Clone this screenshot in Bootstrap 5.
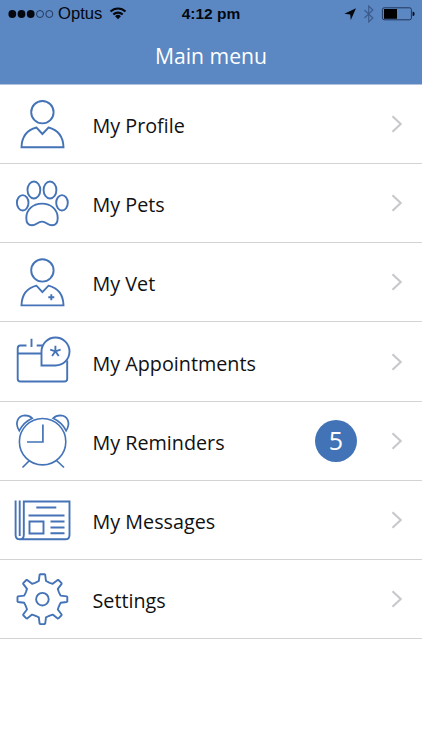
<!DOCTYPE html>
<html lang="en">

<head>
    <meta charset="UTF-8">
    <meta name="viewport" content="width=device-width, initial-scale=1.0">
    <title>Main menu</title>
    <link href="https://cdn.jsdelivr.net/npm/bootstrap@5.3.0/dist/css/bootstrap.min.css" rel="stylesheet">
    <script src="https://cdn.jsdelivr.net/npm/bootstrap@5.3.0/dist/js/bootstrap.bundle.min.js"></script>
    <style>
        body {
            font-family: "Open Sans", "Noto Sans", sans-serif;
            overflow: hidden;
        }

        .app-header {
            height: 85px;
            background: #5b87c2;
            border-bottom: 1px solid #b3c3de;
        }

        .status-bar {
            height: 28px;
            font-family: "Liberation Sans", Arial, sans-serif;
            font-size: 16.6px;
            line-height: 28px;
            color: #05080f;
        }

        .status-bar svg {
            display: block;
        }

        .status-time {
            font-size: 15.5px;
        }

        .page-title {
            font-size: 21.2px;
            line-height: 56px;
        }

        .menu-row {
            height: 79.17px;
            border-bottom: 1px solid #d3d3d5;
            color: #111;
        }

        .menu-row:hover {
            color: #111;
        }

        .menu-icon {
            width: 80px;
            height: 78px;
            margin-right: 12.5px;
            fill: none;
            stroke: #4473b7;
            stroke-width: 1.9;
        }

        .menu-label {
            font-size: 19.75px;
            line-height: 28px;
            padding-top: 4px;
        }

        .count {
            width: 42px;
            height: 42px;
            margin-right: 34px;
            padding-top: 1px;
            background: #4273b7;
            font-size: 25px;
        }

        .chevron {
            width: 12px;
            height: 18px;
            margin-right: 19px;
            fill: none;
            stroke: #c7c7cc;
            stroke-width: 2.1;
        }
    </style>
</head>

<body class="bg-white">

    <header class="app-header text-white text-center">
        <div class="status-bar row g-0">
            <div class="col-5 d-flex align-items-center">
                <svg width="58" height="28">
                    <g fill="#05080f">
                        <circle cx="12.3" cy="14" r="3.9" />
                        <circle cx="21.5" cy="14" r="3.9" />
                        <circle cx="30.7" cy="14" r="3.9" />
                    </g>
                    <g fill="none" stroke="#142545" stroke-width=".8">
                        <circle cx="40" cy="14" r="3.5" />
                        <circle cx="49.3" cy="14" r="3.5" />
                    </g>
                </svg>
                <span>Optus</span>
                <svg width="30" height="28" fill="none" stroke="#05080f" stroke-width="2.1">
                    <path d="M8.5 11.6a10.7 10.7 0 0 1 15 0M11.3 14.6a6.7 6.7 0 0 1 9.4 0" />
                    <path d="M16 19.2l-2.9-2.9a4.1 4.1 0 0 1 5.8 0z" fill="#05080f" stroke="none" />
                </svg>
            </div>
            <div class="col-2 text-nowrap fw-bold status-time">4:12 pm</div>
            <div class="col-5 d-flex justify-content-end">
                <svg width="84" height="28">
                    <path d="M18 8.2L12.8 20l-.6-5.6-5.8-.6z" fill="#05080f" />
                    <path d="M26.4 10l8.5 8-4.2 4V6l4.2 4-8.5 8" fill="none" stroke="#3a5a8c" stroke-width="1.1" />
                    <rect x="44.4" y="7.8" width="29" height="12" rx="1.8" fill="none" stroke="#21375e" stroke-width="1" />
                    <path d="M46 9h13v9.8H46z" fill="#000" />
                    <path d="M74.6 11.6q2 .5 2 2.3t-2 2.3z" fill="#05080f" />
                </svg>
            </div>
        </div>
        <div class="page-title">Main menu</div>
    </header>

    <nav>
        <a href="#" class="menu-row d-flex align-items-center text-decoration-none">
            <svg class="menu-icon" viewBox="0 0 80 78">
                <circle cx="42.4" cy="27.2" r="11.2" />
                <path d="M36.5 42.5C27 45 21.8 52 21.5 62.3h42C63.2 52 58 45 48.5 42.5L42.4 49z" />
            </svg>
            <span class="menu-label">My Profile</span>
            <svg class="chevron ms-auto" viewBox="0 0 12 18"><path d="M1.5 1.3L9.7 9l-8.2 7.7" /></svg>
        </a>
        <a href="#" class="menu-row d-flex align-items-center text-decoration-none">
            <svg class="menu-icon" viewBox="0 0 80 78">
                <ellipse cx="33.9" cy="26" rx="6.4" ry="8.5" />
                <ellipse cx="50" cy="26" rx="6.4" ry="8.5" />
                <ellipse cx="22.7" cy="38.8" rx="5.8" ry="7.7" />
                <ellipse cx="62" cy="38.8" rx="5.8" ry="7.7" />
                <path d="M42 39.6C33 39.6 26.3 45.5 26.3 54C26.3 58.5 28.5 61.3 32 61.3C36.5 61.3 37.5 57.6 42 57.6S47.5 61.3 52 61.3C55.5 61.3 57.7 58.5 57.7 54C57.7 45.5 51 39.6 42 39.6z" />
            </svg>
            <span class="menu-label">My Pets</span>
            <svg class="chevron ms-auto" viewBox="0 0 12 18"><path d="M1.5 1.3L9.7 9l-8.2 7.7" /></svg>
        </a>
        <a href="#" class="menu-row d-flex align-items-center text-decoration-none">
            <svg class="menu-icon" viewBox="0 0 80 78">
                <circle cx="42.4" cy="27.4" r="11.2" />
                <path d="M36.5 42.7C27 45 21.8 52 21.5 62.4h42C63.2 52 58 45 48.5 42.7L42.4 49.2z" />
                <path d="M48.3 54.2h6M51.3 51.2v6" />
            </svg>
            <span class="menu-label">My Vet</span>
            <svg class="chevron ms-auto" viewBox="0 0 12 18"><path d="M1.5 1.3L9.7 9l-8.2 7.7" /></svg>
        </a>
        <a href="#" class="menu-row d-flex align-items-center text-decoration-none">
            <svg class="menu-icon" viewBox="0 0 80 78">
                <path d="M26.5 22.5H20.3Q17.7 22.5 17.7 25.5V55.7Q17.7 58.5 20.5 58.5H64.3Q67.2 58.5 67.2 55.7V37.5M17.7 30.5H41.5M31.5 15.7V24M36.7 22.5h6" />
                <path d="M41.5 42.5V28.5A14 14 0 1 1 55.5 42.5z" />
                <path d="M55.4 28.3v-5.6M55.4 28.3l5.2-1.6M55.4 28.3l3.3 4.7M55.4 28.3l-3.3 4.7M55.4 28.3l-5.2-1.6" />
            </svg>
            <span class="menu-label">My Appointments</span>
            <svg class="chevron ms-auto" viewBox="0 0 12 18"><path d="M1.5 1.3L9.7 9l-8.2 7.7" /></svg>
        </a>
        <a href="#" class="menu-row d-flex align-items-center text-decoration-none">
            <svg class="menu-icon" viewBox="0 0 80 78">
                <circle cx="42.6" cy="39.7" r="23.2" stroke-width="1.6" />
                <path d="M42.9 22.5V40H27M29.5 58.5L22.5 65.5M56.5 58.5L64 65.5" stroke-width="1.7" />
                <path d="M19.3 28.7C14.5 21.5 17.5 13.5 25 13.3Q29.5 13.3 32.3 16.3Q23.5 20.3 19.3 28.7z" stroke-width="1.7" />
                <path d="M66.1 28.7C70.9 21.5 67.9 13.5 60.4 13.3Q55.9 13.3 53.1 16.3Q61.9 20.3 66.1 28.7z" stroke-width="1.7" />
            </svg>
            <span class="menu-label">My Reminders</span>
            <span class="count ms-auto rounded-circle text-white d-flex align-items-center justify-content-center">5</span>
            <svg class="chevron" viewBox="0 0 12 18"><path d="M1.5 1.3L9.7 9l-8.2 7.7" /></svg>
        </a>
        <a href="#" class="menu-row d-flex align-items-center text-decoration-none">
            <svg class="menu-icon" viewBox="0 0 80 78">
                <path d="M15.6 19.5V54Q15.6 58.3 19.8 58.3H65.5Q69.5 58.3 69.5 54V20.5H23.8V54Q23.8 58.3 19.8 58.3M19.7 19.5V55" />
                <path d="M36.3 26.5h20M28.5 34.5h36M50.5 40.5h14M50.5 46.5h14M50.5 52.3h14" />
                <path d="M29.5 40.5h14v12h-14z" />
            </svg>
            <span class="menu-label">My Messages</span>
            <svg class="chevron ms-auto" viewBox="0 0 12 18"><path d="M1.5 1.3L9.7 9l-8.2 7.7" /></svg>
        </a>
        <a href="#" class="menu-row d-flex align-items-center text-decoration-none">
            <svg class="menu-icon" viewBox="0 0 80 78" stroke-linejoin="round">
                <circle cx="42.4" cy="39.2" r="6.3" />
                <path id="gear" />
            </svg>
            <span class="menu-label">Settings</span>
            <svg class="chevron ms-auto" viewBox="0 0 12 18"><path d="M1.5 1.3L9.7 9l-8.2 7.7" /></svg>
        </a>
    </nav>

    <script>
        // one tooth of the gear, repeated every 45 degrees
        let tooth = [[-6.4, -16.8], [-3.6, -18.2], [-2.8, -24.4], [-2.2, -24.9], [2.2, -24.9], [2.8, -24.4], [3.6, -18.2], [6.4, -16.8]];
        let points = [];
        for (let i = 0; i < 8; i++) {
            let a = i * Math.PI / 4;
            for (let [x, y] of tooth) {
                let px = 42.4 + x * Math.cos(a) - y * Math.sin(a);
                let py = 39.2 + x * Math.sin(a) + y * Math.cos(a);
                points.push(px.toFixed(2) + " " + py.toFixed(2));
            }
        }
        document.getElementById("gear").setAttribute("d", "M" + points.join("L") + "z");
    </script>

</body>

</html>
